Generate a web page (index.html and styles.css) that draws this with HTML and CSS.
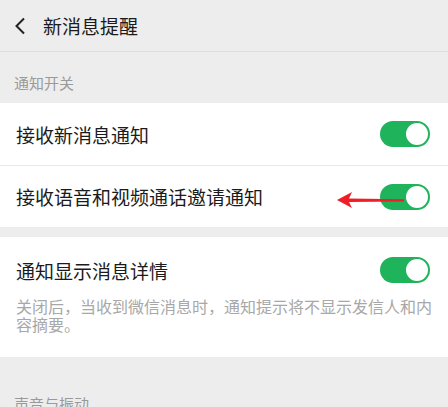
FILE: index.html
```html
<!DOCTYPE html>
<html lang="zh-CN">
<head>
    <meta charset="UTF-8">
    <title>新消息提醒</title>
    <link rel="stylesheet" href="styles.css">
</head>
<body>
<div class="header">
    <svg class="back" width="12" height="18" viewBox="0 0 12 18">
        <path d="M10 1.5 L2.5 9 L10 16.5" fill="none" stroke="#222" stroke-width="2"/>
    </svg>
    <span class="title">新消息提醒</span>
</div>

<div class="label">通知开关</div>
<div class="card">
    <div class="row">
        <span>接收新消息通知</span>
        <span class="switch"><i></i></span>
    </div>
    <div class="row row-arrow">
        <span>接收语音和视频通话邀请通知</span>
        <span class="switch"><i></i></span>
        <!-- 红色箭头标注 -->
        <svg class="arrow" width="72" height="18" viewBox="0 0 72 18">
            <polygon points="2,9 17,1 14,7.5 69,8.3 69,10.5 14,11 17,17" fill="#ef1f27"/>
        </svg>
    </div>
</div>

<div class="card card-detail">
    <div class="detail-top">
        <span>通知显示消息详情</span>
        <span class="switch"><i></i></span>
    </div>
    <p class="desc">关闭后，当收到微信消息时，通知提示将不显示发信人和内容摘要。</p>
</div>

<div class="label label-sound">声音与振动</div>
</body>
</html>
```

FILE: styles.css
```css
*{
    padding: 0;
    margin: 0;
    box-sizing: border-box;
}
body{
    width: 448px;
    height: 407px;
    overflow: hidden;
    background: #ededed;
    font-family: "Noto Sans CJK SC", "Noto Sans", sans-serif;
    color: #1b1b1b;
}
.header{
    height: 52px;
    display: flex;
    align-items: center;
    padding-left: 14px;
    border-bottom: 1px solid #dddddd;
}
.back{
    margin-right: 17px;
    margin-top: 1px;
}
.title{
    font-size: 19px;
    line-height: 26px;
}
.label{
    height: 51px;
    padding: 22px 0 0 14px;
    font-size: 15px;
    line-height: 18px;
    color: #9a9a9a;
}
.card{
    background: #fff;
}
.row{
    height: 62px;
    display: flex;
    align-items: center;
    justify-content: space-between;
    padding: 0 18px 0 16px;
    font-size: 19px;
    position: relative;
}
.row + .row{
    border-top: 1px solid #e8e8e8;
}
.row-arrow{
    margin-left: 0;
}
.switch{
    width: 50px;
    height: 26px;
    border-radius: 13px;
    background: #1fb35c;
    display: flex;
    align-items: center;
    justify-content: flex-end;
    padding-right: 2px;
}
.switch i{
    width: 22px;
    height: 22px;
    border-radius: 50%;
    background: #fff;
}
.arrow{
    position: absolute;
    left: 335px;
    top: 25px;
    z-index: 2;
}
.card-detail{
    margin-top: 10px;
    padding: 20px 18px 24px 16px;
}
.detail-top{
    display: flex;
    align-items: center;
    justify-content: space-between;
    height: 26px;
    font-size: 19px;
}
.desc{
    margin-top: 14px;
    font-size: 16px;
    line-height: 18px;
    color: #a8a8a8;
    margin-right: -2px;
}
.label-sound{
    padding-top: 38px;
}
```
